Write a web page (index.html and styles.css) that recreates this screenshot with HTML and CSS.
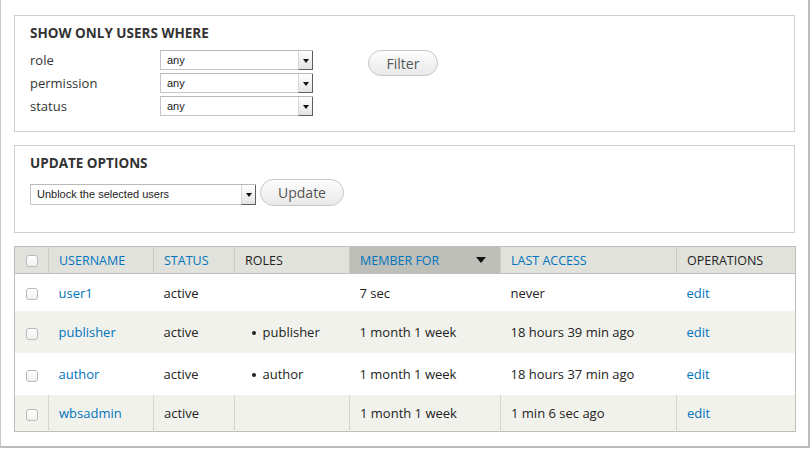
FILE: index.html
```html
<!DOCTYPE html>
<html>
<head>
<meta charset="utf-8">
<link rel="stylesheet" href="styles.css">
</head>
<body>
<div class="frame">
  <section class="panel filters">
    <h2 class="panel-title">SHOW ONLY USERS WHERE</h2>
    <div class="filter-body">
      <div class="fields">
        <div class="field">
          <span class="label">role</span>
          <div class="select"><span class="select-text">any</span><span class="select-btn"><i class="tri"></i></span></div>
        </div>
        <div class="field">
          <span class="label">permission</span>
          <div class="select"><span class="select-text">any</span><span class="select-btn"><i class="tri"></i></span></div>
        </div>
        <div class="field">
          <span class="label">status</span>
          <div class="select"><span class="select-text">any</span><span class="select-btn"><i class="tri"></i></span></div>
        </div>
      </div>
      <button class="btn btn-filter">Filter</button>
    </div>
  </section>

  <section class="panel update">
    <h2 class="panel-title">UPDATE OPTIONS</h2>
    <div class="update-row">
      <div class="select select-wide"><span class="select-text">Unblock the selected users</span><span class="select-btn"><i class="tri"></i></span></div>
      <button class="btn btn-update">Update</button>
    </div>
  </section>

  <table class="users">
    <colgroup>
      <col class="c-check"><col class="c-user"><col class="c-status"><col class="c-roles"><col class="c-member"><col class="c-access"><col class="c-ops">
    </colgroup>
    <thead>
      <tr>
        <th class="check"><span class="cb"></span></th>
        <th><a>USERNAME</a></th>
        <th><a>STATUS</a></th>
        <th>ROLES</th>
        <th class="sorted"><div class="sort-head"><a>MEMBER FOR</a><i class="sort-tri"></i></div></th>
        <th><a>LAST ACCESS</a></th>
        <th>OPERATIONS</th>
      </tr>
    </thead>
    <tbody>
      <tr class="r1">
        <td class="check"><span class="cb"></span></td>
        <td><a>user1</a></td>
        <td>active</td>
        <td></td>
        <td>7 sec</td>
        <td>never</td>
        <td><a>edit</a></td>
      </tr>
      <tr class="r2 even">
        <td class="check"><span class="cb"></span></td>
        <td><a>publisher</a></td>
        <td>active</td>
        <td><ul class="roles"><li>publisher</li></ul></td>
        <td>1 month 1 week</td>
        <td>18 hours 39 min ago</td>
        <td><a>edit</a></td>
      </tr>
      <tr class="r3">
        <td class="check"><span class="cb"></span></td>
        <td><a>author</a></td>
        <td>active</td>
        <td><ul class="roles"><li>author</li></ul></td>
        <td>1 month 1 week</td>
        <td>18 hours 37 min ago</td>
        <td><a>edit</a></td>
      </tr>
      <tr class="r4 even last">
        <td class="check"><span class="cb"></span></td>
        <td><a>wbsadmin</a></td>
        <td>active</td>
        <td></td>
        <td>1 month 1 week</td>
        <td>1 min 6 sec ago</td>
        <td><a>edit</a></td>
      </tr>
    </tbody>
  </table>
</div>
</body>
</html>
```

FILE: styles.css
```css
html, body {
  margin: 0;
  padding: 0;
  background: #fff;
}

body {
  font-family: "Open Sans", "DejaVu Sans", sans-serif;
  font-size: 13px;
  color: #333;
}

.frame {
  box-sizing: border-box;
  width: 810px;
  height: 448px;
  border-left: 1px solid #c6c6c6;
  border-right: 2px solid #bcbcbc;
  border-bottom: 2px solid #bcbcbc;
  padding: 15px 13px 0 13px;
  background: #fff;
}

.panel {
  border: 1px solid #cfcfcf;
  padding: 8px 15px 15px 15px;
}

.panel-title {
  margin: 0;
  font-size: 13.5px;
  line-height: 18px;
  font-weight: 700;
  color: #333;
}

.filter-body {
  display: flex;
  align-items: flex-start;
  margin-top: 8px;
}

.fields {
  display: flex;
  flex-direction: column;
  gap: 3px;
}

.field {
  display: flex;
  align-items: center;
  height: 20px;
}

.label {
  width: 130px;
  font-size: 13px;
  color: #333;
}

.select {
  box-sizing: border-box;
  display: flex;
  width: 153px;
  height: 20px;
  border: 1px solid #c4c4c4;
  border-top-color: #b8b8b8;
  background: #fff;
  font-family: "Liberation Sans", Arial, sans-serif;
  font-size: 11px;
  color: #222;
}

.select-text {
  flex: 1;
  padding-left: 6px;
  line-height: 18px;
}

.select-btn {
  box-sizing: border-box;
  width: 15px;
  height: 19px;
  margin-right: -1px;
  border-left: 1px solid #d4d4d4;
  border-right: 1px solid #5e5e5e;
  border-bottom: 1px solid #5e5e5e;
  background: linear-gradient(#ffffff, #e4e4e4);
  display: flex;
  align-items: center;
  justify-content: center;
}

.tri {
  display: block;
  width: 0;
  height: 0;
  border-left: 3px solid transparent;
  border-right: 3px solid transparent;
  border-top: 4px solid #111;
  margin-top: 1px;
}

.btn {
  box-sizing: border-box;
  font-family: "Open Sans", "DejaVu Sans", sans-serif;
  color: #555;
  border: 1px solid #c6c6c6;
  border-radius: 14px;
  background: linear-gradient(#fdfdfd, #e9e9e9);
  padding: 0;
  cursor: pointer;
}

.btn-filter {
  width: 70px;
  height: 26px;
  margin-left: 55px;
  font-size: 14px;
}

.update {
  margin-top: 13px;
  padding-bottom: 26px;
}

.update-row {
  display: flex;
  align-items: flex-end;
  margin-top: 7px;
}

.select-wide {
  width: 226px;
  height: 21px;
  margin-bottom: 1px;
}

.select-wide .select-text {
  line-height: 19px;
}

.select-wide .select-btn {
  height: 20px;
}

.btn-update {
  width: 84px;
  height: 27px;
  margin-left: 4px;
  font-size: 14px;
}

a {
  color: #0074bd;
  text-decoration: none;
}

.users {
  margin-top: 13px;
  width: 781px;
  border-collapse: collapse;
  border: 1px solid #bfbfba;
  table-layout: fixed;
  font-size: 13px;
}

.c-check { width: 34px; }
.c-user { width: 105px; }
.c-status { width: 81px; }
.c-roles { width: 115px; }
.c-member { width: 151px; }
.c-access { width: 176px; }
.c-ops { width: 119px; }

.users th {
  height: 26px;
  padding: 0 0 0 10px;
  background: #e1e2dc;
  border-bottom: 1px solid #bfbfba;
  border-left: 1px solid #cacac5;
  text-align: left;
  font-weight: 400;
  font-size: 12.5px;
  color: #222;
  vertical-align: middle;
}

.users th.sorted {
  background: #bebfb9;
}

.sort-head {
  display: flex;
  align-items: center;
  justify-content: space-between;
  padding-right: 14px;
}

.sort-tri {
  display: block;
  width: 0;
  height: 0;
  border-left: 5px solid transparent;
  border-right: 5px solid transparent;
  border-top: 6px solid #111;
}

.users td {
  padding: 0 0 0 10px;
  vertical-align: middle;
  color: #222;
}

.users .check {
  padding: 0;
  text-align: center;
}

.users th.check {
  border-left: none;
}

.cb {
  display: inline-block;
  box-sizing: border-box;
  width: 12px;
  height: 12px;
  border: 1px solid #b9b9b9;
  border-radius: 3px;
  background: linear-gradient(#ffffff, #f1f1f1);
  vertical-align: middle;
}

.r1 td { height: 37px; }
.r2 td, .r3 td { height: 42px; }
.r4 td { height: 36px; }

.even td {
  background: #f2f2ed;
}

.last td + td {
  border-left: 1px solid #d6d6d1;
}

.roles {
  margin: 0;
  padding: 0;
  list-style: none;
}

.roles li::before {
  content: "";
  display: inline-block;
  width: 4px;
  height: 4px;
  border-radius: 50%;
  background: #222;
  margin: 0 7px 0 7px;
  vertical-align: middle;
  position: relative;
  top: -1px;
}
```
